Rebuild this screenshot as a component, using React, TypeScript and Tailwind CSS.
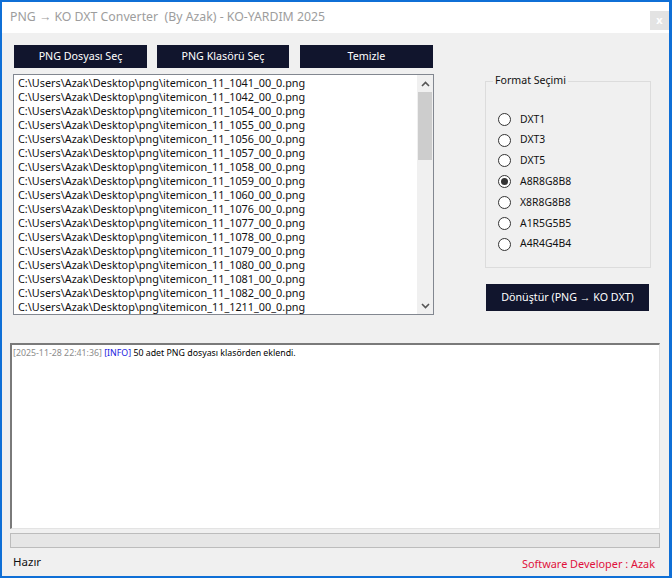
const files = [
  '1041', '1042', '1054', '1055', '1056', '1057', '1058', '1059', '1060',
  '1076', '1077', '1078', '1079', '1080', '1081', '1082', '1211',
]

const formats = ['DXT1', 'DXT3', 'DXT5', 'A8R8G8B8', 'X8R8G8B8', 'A1R5G5B5', 'A4R4G4B4']

function NavyButton({ label, className }: { label: string; className: string }) {
  return (
    <button
      className={`flex items-center justify-center bg-[#11152d] text-[10.7px] text-white ${className}`}
    >
      {label}
    </button>
  )
}

function Radio({ label, checked }: { label: string; checked?: boolean }) {
  return (
    <div className="flex h-[20.8px] items-center">
      <span className="flex h-[13px] w-[13px] items-center justify-center rounded-full border border-[#333] bg-white">
        {checked && <span className="h-[7px] w-[7px] rounded-full bg-[#333]" />}
      </span>
      <span className="ml-[9px] text-[10.4px] text-[#111]">{label}</span>
    </div>
  )
}

function Chevron({ up }: { up?: boolean }) {
  return (
    <svg width="9" height="6" viewBox="0 0 9 6">
      <path
        d={up ? 'M1 5 L4.5 1.5 L8 5' : 'M1 1 L4.5 4.5 L8 1'}
        fill="none"
        stroke="#555"
        strokeWidth="1.6"
      />
    </svg>
  )
}

export default function App() {
  return (
    <div
      className="flex h-[578px] w-[672px] flex-col border-t-2 border-r-[3px] border-b-2 border-l-2 border-[#0f6fd6] bg-[#f0f0f0] text-black"
      style={{ fontFamily: '"Noto Sans", "Open Sans", sans-serif' }}
    >
      {/* title bar */}
      <div className="flex h-[31px] shrink-0 items-center justify-between bg-white pl-[8px]">
        <span className="text-[12.3px] text-[#9d9d9d]">
          PNG → KO DXT Converter&nbsp; (By Azak) - KO-YARDIM 2025
        </span>
        <span className="mt-[6px] flex h-[19px] w-[19px] items-center justify-center bg-[#e3e3e3] text-[11px] font-bold text-white">
          x
        </span>
      </div>

      <div className="flex flex-1 flex-col">
        <div className="flex items-start">
          {/* left column */}
          <div className="ml-[11px] mt-[12px] w-[421px]">
            <div className="flex pl-[1px]">
              <NavyButton label="PNG Dosyası Seç" className="h-[23px] w-[133px]" />
              <NavyButton label="PNG Klasörü Seç" className="ml-[10px] h-[23px] w-[132px]" />
              <NavyButton label="Temizle" className="ml-[11px] h-[23px] w-[133px]" />
            </div>
            <div className="mt-[6px] flex h-[241px] border border-[#828790] bg-white">
              <div className="flex-1 pl-[4px] pt-[1px]">
                {files.map((f) => (
                  <div key={f} className="h-[14px] text-[10.85px] leading-[14px] text-[#111]">
                    C:\Users\Azak\Desktop\png\itemicon_11_{f}_00_0.png
                  </div>
                ))}
              </div>
              <div className="flex w-[16px] flex-col bg-[#f0f0f0]">
                <div className="flex h-[17px] items-center justify-center">
                  <Chevron up />
                </div>
                <div className="mx-[1px] h-[68px] bg-[#cdcdcd]" />
                <div className="flex-1" />
                <div className="flex h-[17px] items-center justify-center">
                  <Chevron />
                </div>
              </div>
            </div>
          </div>

          {/* right column */}
          <div className="ml-[51px] mt-[48px]">
            <div className="relative h-[187px] w-[166px] border border-[#dcdcdc] pl-[12px] pt-[27px]">
              <span className="absolute -top-[9px] left-[7px] bg-[#f0f0f0] px-[2px] text-[10.6px] text-[#111]">
                Format Seçimi
              </span>
              {formats.map((f) => (
                <Radio key={f} label={f} checked={f === 'A8R8G8B8'} />
              ))}
            </div>
            <NavyButton
              label="Dönüştür (PNG → KO DXT)"
              className="ml-[1px] mt-[16px] h-[27px] w-[163px]"
            />
          </div>
        </div>

        {/* log */}
        <div className="ml-[8px] mt-[28px] h-[186px] w-[650px] border-t-2 border-l-2 border-r border-b border-t-[#7a7a7a] border-l-[#7a7a7a] border-r-[#e3e3e3] border-b-[#e3e3e3] bg-white pl-[1px] pt-[2px]">
          <div className="text-[8.8px] leading-[12px]">
            <span className="text-[#8c8c8c]">[2025-11-28 22:41:36]</span>{' '}
            <span className="text-[#2020e0]">[INFO]</span>{' '}
            <span className="text-black">50 adet PNG dosyası klasörden eklendi.</span>
          </div>
        </div>

        {/* progress */}
        <div className="ml-[8px] mt-[4px] h-[15px] w-[650px] border border-[#bcbcbc] bg-[#e6e6e6]" />

        {/* status */}
        <div className="flex flex-1 items-center justify-between">
          <span className="ml-[11px] text-[11.5px] text-[#111]">Hazır</span>
          <span className="mr-[14px] mt-[5px] text-[10.9px] text-[#e0103c]">
            Software Developer : Azak
          </span>
        </div>
      </div>
    </div>
  )
}
